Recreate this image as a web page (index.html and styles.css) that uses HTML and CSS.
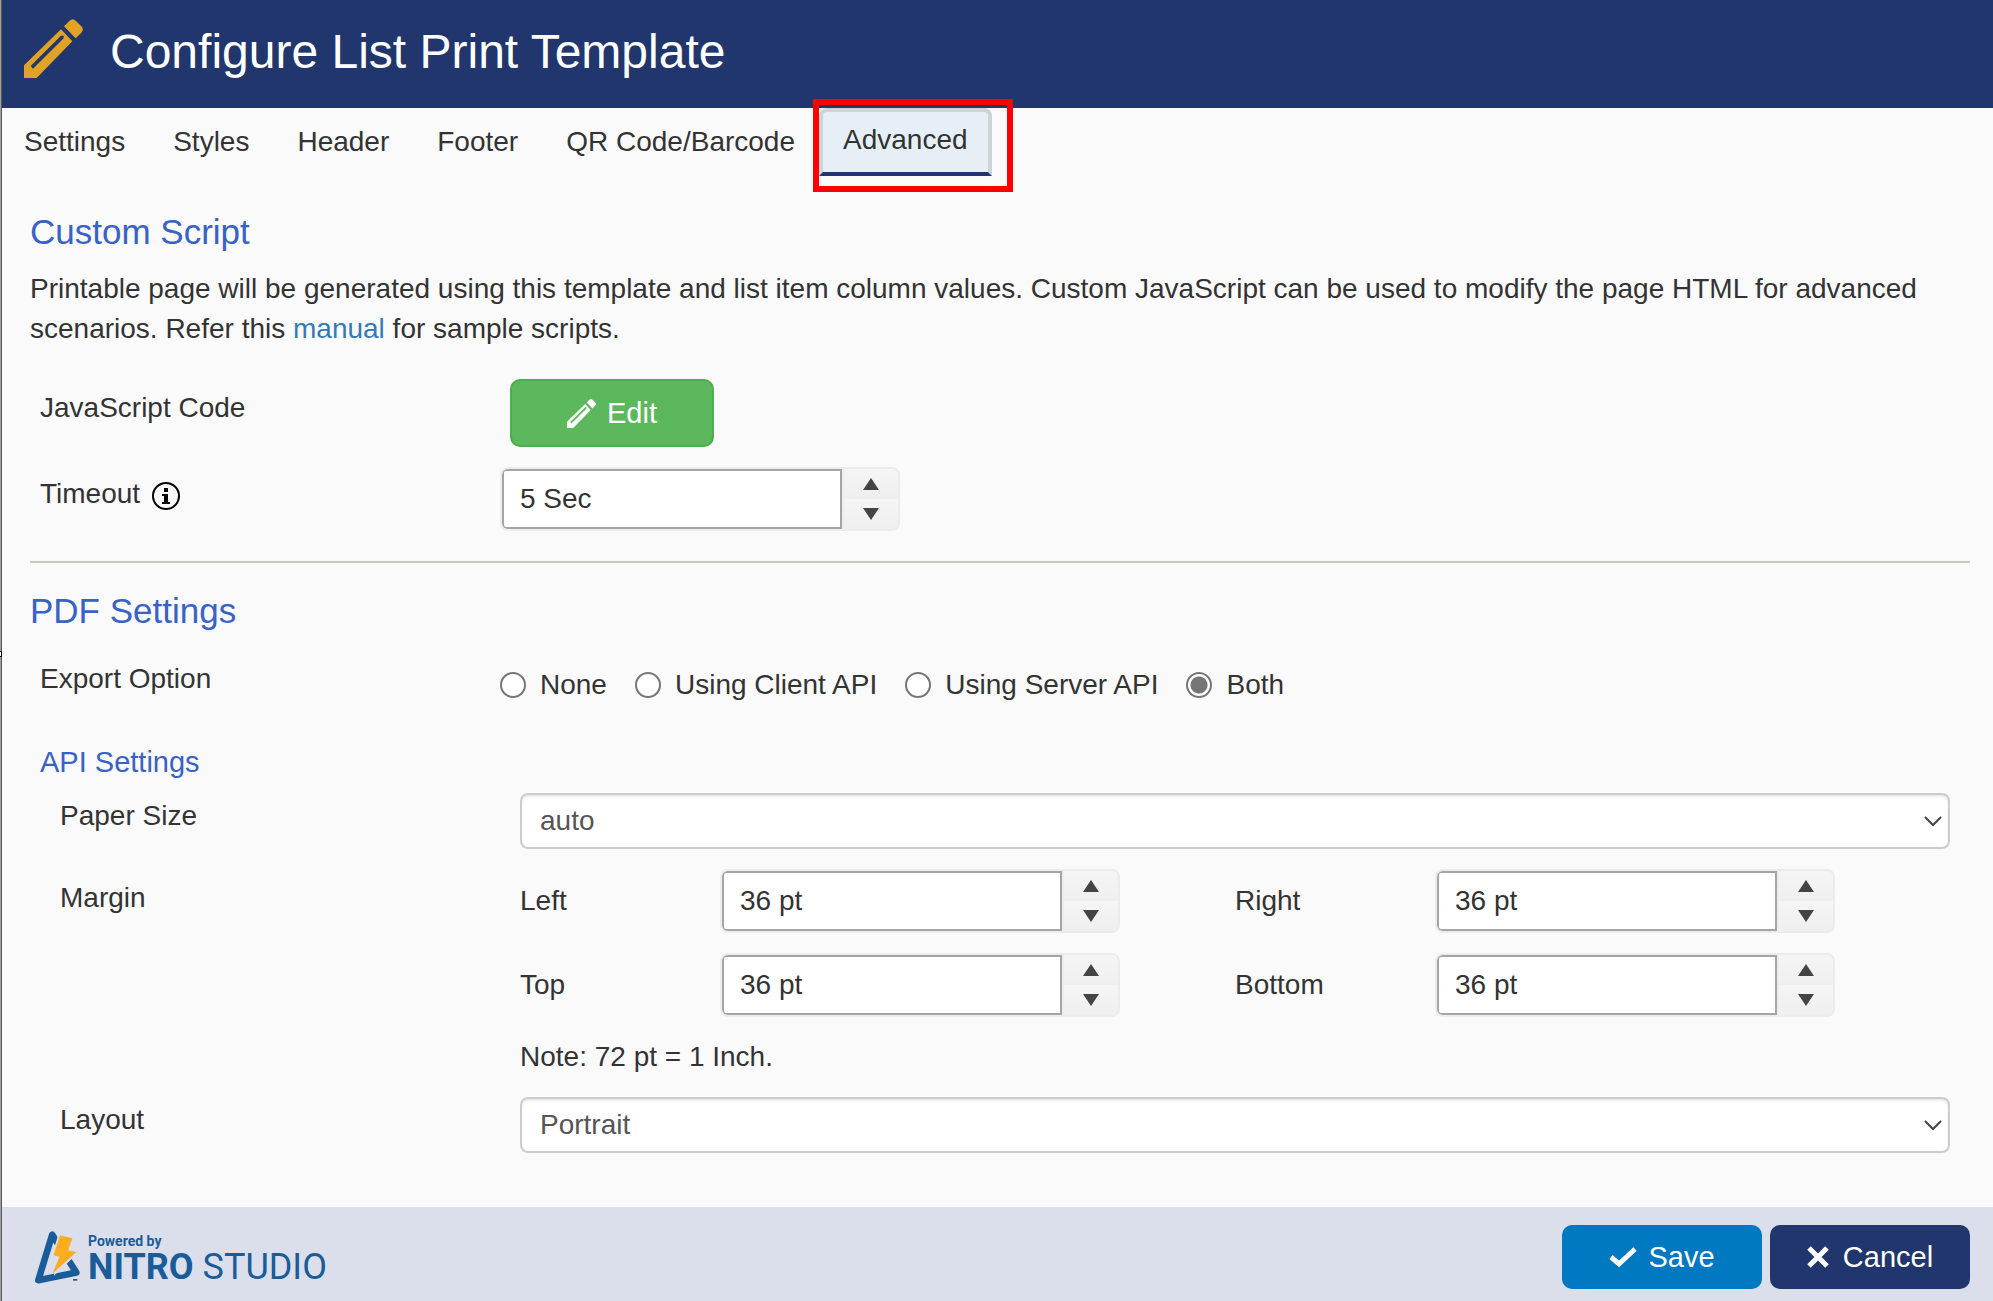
FILE: index.html
```html
<!DOCTYPE html>
<html lang="en">
<head>
<meta charset="utf-8">
<title>Configure List Print Template</title>
<meta name="viewport" content="width=device-width, initial-scale=1">
<link rel="stylesheet" href="styles.css">
</head>
<body>
<svg class="sprite" aria-hidden="true">
  <symbol id="pencil" viewBox="72 57 177 177">
    <path fill-rule="evenodd" d="M72 234V196L183 88L217 124L110 234ZM92 198L99 206L191 115V107H183L92 198Z"/>
    <path d="M192 79L209 62Q218 53 227 62L244 79Q253 88 244 98L227 115Z"/>
  </symbol>
  <symbol id="up" viewBox="0 0 16 12"><path d="M8 0L16 12H0Z"/></symbol>
  <symbol id="down" viewBox="0 0 16 12"><path d="M8 12L16 0H0Z"/></symbol>
  <symbol id="chevron" viewBox="0 0 18 12"><path d="M1 2L9 10L17 2" fill="none" stroke="currentColor" stroke-width="2"/></symbol>
</svg>

<form class="page">
  <div class="resize-handle" aria-hidden="true"></div>

  <header class="header">
    <svg class="header-icon" aria-hidden="true"><use href="#pencil"/></svg>
    <h1 class="title">Configure List Print Template</h1>
  </header>

  <nav class="tabs">
    <a class="tab" href="#settings">Settings</a>
    <a class="tab" href="#styles">Styles</a>
    <a class="tab" href="#header">Header</a>
    <a class="tab" href="#footer">Footer</a>
    <a class="tab" href="#code">QR Code/Barcode</a>
    <div class="tab-current">
      <a class="tab tab-active" href="#advanced" aria-current="page">Advanced</a>
      <span class="highlight"></span>
    </div>
  </nav>

  <main class="content">
    <section class="section">
      <h2 class="heading">Custom Script</h2>
      <p class="intro">Printable page will be generated using this template and list item column values. Custom JavaScript can be used to modify the page HTML for advanced scenarios. Refer this <a class="link" href="#manual">manual</a> for sample scripts.</p>
      <div class="rows">
        <div class="row">
          <span class="label label-button">JavaScript Code</span>
          <button class="button button-edit" type="button">
            <svg class="edit-icon" aria-hidden="true"><use href="#pencil"/></svg>Edit
          </button>
        </div>
        <div class="row">
          <div class="label label-spinner">
            <label for="timeout">Timeout</label>
            <svg class="info" viewBox="0 0 28 28" aria-hidden="true"><circle cx="14" cy="14" r="13" fill="none" stroke="#000" stroke-width="2"/><path d="M12 6h4v4h-4zM10 12h6v8h2v2h-8v-2h2v-6h-2z"/></svg>
          </div>
          <div class="spinner">
            <input class="spinner-input" id="timeout" type="text" value="5 Sec">
            <div class="spinner-buttons">
              <button class="step" type="button" aria-label="Increase timeout"><svg class="arrow"><use href="#up"/></svg></button>
              <button class="step" type="button" aria-label="Decrease timeout"><svg class="arrow"><use href="#down"/></svg></button>
            </div>
          </div>
        </div>
      </div>
    </section>

    <section class="section section-pdf">
      <h2 class="heading">PDF Settings</h2>
      <div class="row row-export">
        <span class="label" id="export-label">Export Option</span>
        <div class="radios" role="radiogroup" aria-labelledby="export-label">
          <label class="option"><input class="radio" type="radio" name="export">None</label>
          <label class="option"><input class="radio" type="radio" name="export">Using Client API</label>
          <label class="option"><input class="radio" type="radio" name="export">Using Server API</label>
          <label class="option"><input class="radio" type="radio" name="export" checked>Both</label>
        </div>
      </div>

      <h3 class="subheading">API Settings</h3>
      <div class="rows rows-api">
        <div class="row">
          <label class="label label-select" for="paper">Paper Size</label>
          <div class="select-wrap">
            <select class="select" id="paper"><option>auto</option></select>
            <svg class="chevron" aria-hidden="true"><use href="#chevron"/></svg>
          </div>
        </div>
        <div class="row">
          <span class="label label-button">Margin</span>
          <div class="margins">
            <div class="margin">
              <label for="left">Left</label>
              <div class="spinner">
                <input class="spinner-input" id="left" type="text" value="36 pt">
                <div class="spinner-buttons">
                  <button class="step" type="button" aria-label="Increase left"><svg class="arrow"><use href="#up"/></svg></button>
                  <button class="step" type="button" aria-label="Decrease left"><svg class="arrow"><use href="#down"/></svg></button>
                </div>
              </div>
            </div>
            <div class="margin">
              <label for="right">Right</label>
              <div class="spinner">
                <input class="spinner-input" id="right" type="text" value="36 pt">
                <div class="spinner-buttons">
                  <button class="step" type="button" aria-label="Increase right"><svg class="arrow"><use href="#up"/></svg></button>
                  <button class="step" type="button" aria-label="Decrease right"><svg class="arrow"><use href="#down"/></svg></button>
                </div>
              </div>
            </div>
            <div class="margin">
              <label for="top">Top</label>
              <div class="spinner">
                <input class="spinner-input" id="top" type="text" value="36 pt">
                <div class="spinner-buttons">
                  <button class="step" type="button" aria-label="Increase top"><svg class="arrow"><use href="#up"/></svg></button>
                  <button class="step" type="button" aria-label="Decrease top"><svg class="arrow"><use href="#down"/></svg></button>
                </div>
              </div>
            </div>
            <div class="margin">
              <label for="bottom">Bottom</label>
              <div class="spinner">
                <input class="spinner-input" id="bottom" type="text" value="36 pt">
                <div class="spinner-buttons">
                  <button class="step" type="button" aria-label="Increase bottom"><svg class="arrow"><use href="#up"/></svg></button>
                  <button class="step" type="button" aria-label="Decrease bottom"><svg class="arrow"><use href="#down"/></svg></button>
                </div>
              </div>
            </div>
            <p class="note">Note: 72 pt = 1 Inch.</p>
          </div>
        </div>
        <div class="row">
          <label class="label label-select" for="layout">Layout</label>
          <div class="select-wrap">
            <select class="select" id="layout"><option>Portrait</option></select>
            <svg class="chevron" aria-hidden="true"><use href="#chevron"/></svg>
          </div>
        </div>
      </div>
    </section>
  </main>

  <footer class="footer">
    <div class="logo">
      <svg class="logo-mark" viewBox="105 121 136 159" aria-hidden="true">
        <path d="M157 132L115 269L230 246Z" fill="none" stroke="#1a5c9a" stroke-width="20" stroke-linejoin="round"/>
        <path d="M177 127L226 138L212 176L240 182L162 256L172 202L155 196Z" fill="#dadfeb"/>
        <path d="M181 133L218 142L205 179L230 184L158 249L179 198L161 194Z" fill="#fdab1f"/>
        <path d="M220 268H233" stroke="#1a5c9a" stroke-width="5"/>
      </svg>
      <div class="logo-text">
        <span class="logo-small">Powered by</span>
        <span class="logo-name"><b>NITRO</b> STUDIO</span>
      </div>
    </div>
    <div class="actions">
      <button class="button button-save" type="button">
        <svg class="check" viewBox="0 0 28 22" aria-hidden="true"><path d="M2 11L10 18L26 3" fill="none" stroke="currentColor" stroke-width="5"/></svg>Save
      </button>
      <button class="button button-cancel" type="button">
        <svg class="cross" viewBox="0 0 22 22" aria-hidden="true"><path d="M2 2L20 20M20 2L2 20" fill="none" stroke="currentColor" stroke-width="5"/></svg>Cancel
      </button>
    </div>
  </footer>
</form>
</body>
</html>
```
FILE: styles.css
```css
* {
  box-sizing: border-box;
}

body {
  margin: 0;
  background: #fafafa;
  color: #333;
  font: 28px/40px "Liberation Sans", Arial, sans-serif;
}

h1, h2, h3, p {
  margin: 0;
  font-weight: 400;
}

a {
  text-decoration: none;
}

button, input, select {
  font: inherit;
  margin: 0;
}

svg {
  display: block;
  flex: none;
  fill: currentColor;
}

.sprite {
  position: absolute;
  width: 0;
  height: 0;
}

.page {
  position: relative;
  display: flex;
  flex-direction: column;
  min-height: 100vh;
}

/* window edge */
.page::before {
  content: "";
  position: absolute;
  inset: 0 auto 0 0;
  width: 2px;
  background: linear-gradient(90deg, #a0a0a0 50%, #5a5a5a 50%);
}

.resize-handle {
  position: absolute;
  top: 50%;
  left: 0;
  width: 2px;
  height: 6px;
  border: solid #000;
  border-width: 1px 1px 1px 0;
  background: #fff;
}

.header {
  display: flex;
  align-items: flex-start;
  gap: 27px;
  padding: 19px 24px 23px;
  background: #21366c;
  color: #fff;
}

.header-icon {
  width: 59px;
  height: 59px;
  color: #e1a325;
}

.title {
  font-size: 48px;
  line-height: 66px;
}

.tabs {
  display: flex;
}

.tab {
  display: block;
  padding: 10px 20px;
  border: 4px solid transparent;
  color: #333;
}

.tab-current {
  position: relative;
}

.tab-active {
  padding: 8px 20px 12px;
  border-color: #cbd5d8;
  border-bottom-color: #21366c;
  border-radius: 8px 8px 0 0;
  background: #e7eff6;
}

.highlight {
  position: absolute;
  inset: -9px -21px -16px -6px;
  border: 6px solid #f00;
  pointer-events: none;
}

.content {
  flex: 1;
  padding: 36px 23px 54px 30px;
}

.section-pdf {
  margin-top: 30px;
  padding-top: 28px;
  border-top: 2px solid #cdc3c3;
}

.heading {
  color: #3862c6;
  font-size: 35px;
}

.intro {
  margin: 17px 0 30px;
}

.link {
  color: #337ab7;
}

.rows {
  display: flex;
  flex-direction: column;
  gap: 20px;
  padding-left: 10px;
}

.row {
  display: grid;
  grid-template-columns: 460px 1fr;
  align-items: start;
}

.row-export {
  padding: 28px 0 0 10px;
}

.label-button {
  padding-top: 9px;
}

.label-spinner {
  display: flex;
  gap: 12px;
  align-items: center;
  padding-top: 7px;
}

.info {
  width: 28px;
  height: 28px;
  margin-top: 4px;
  color: #000;
}

.label-select {
  padding-top: 3px;
}

.button {
  display: flex;
  align-items: center;
  justify-content: center;
  gap: 11px;
  border: 0;
  border-radius: 10px;
  color: #fff;
  font-size: 29px;
  width: 200px;
  height: 64px;
}

.button-edit {
  width: 204px;
  height: 68px;
  margin-left: 10px;
  border: 2px solid #4cae4c;
  background: #5cb85c;
}

.edit-icon {
  width: 29px;
  height: 29px;
}

.spinner {
  display: flex;
  width: 400px;
  height: 64px;
  border: 2px solid #ececec;
  border-radius: 8px;
  background: #ececec;
  overflow: hidden;
}

.spinner-input {
  width: 340px;
  padding: 0 16px;
  border: 2px solid #a5a5a5;
  border-radius: 4px 0 0 4px;
  background: #fff;
  color: #333;
}

.spinner-buttons {
  display: flex;
  flex: 1;
  flex-direction: column;
  padding-left: 2px;
}

.step {
  display: flex;
  flex: 1;
  align-items: center;
  justify-content: center;
  padding: 0;
  border: 0;
  background: linear-gradient(#f5f5f5, #efefef);
  color: #444;
}

.arrow {
  width: 16px;
  height: 12px;
}

.radios {
  display: flex;
  flex-wrap: wrap;
  gap: 28px;
  padding-top: 6px;
}

.option {
  display: flex;
  align-items: center;
  gap: 14px;
}

.radio {
  appearance: none;
  width: 26px;
  height: 26px;
  border: 2px solid #767676;
  border-radius: 50%;
  background: #fff;
}

.radio:checked {
  background: radial-gradient(circle, #767676 8px, #fff 9px);
}

.subheading {
  margin-top: 37px;
  padding-left: 10px;
  color: #3862c6;
  font-size: 29px;
}

.rows-api {
  padding: 11px 20px 0 30px;
}

.select-wrap {
  position: relative;
}

.select {
  appearance: none;
  display: block;
  width: 100%;
  height: 56px;
  padding: 0 48px 0 18px;
  border: 2px solid #ccc;
  border-radius: 8px;
  background: #fff;
  box-shadow: inset 0 2px 2px rgba(0, 0, 0, 0.08);
  color: #555;
}

.chevron {
  position: absolute;
  top: 22px;
  right: 8px;
  width: 18px;
  height: 12px;
  color: #444;
  pointer-events: none;
}

.margins {
  display: grid;
  grid-template-columns: 1fr 1fr;
  gap: 20px 0;
}

.margin {
  display: grid;
  grid-template-columns: 200px 1fr;
  align-items: center;
}

.note {
  grid-column: 1 / -1;
}

.footer {
  display: flex;
  align-items: center;
  justify-content: space-between;
  padding: 15px 23px 9px 35px;
  background: #dadfeb;
}

.logo {
  display: flex;
  align-items: center;
  gap: 8px;
  color: #1a5c9a;
  font-family: Roboto, sans-serif;
}

.logo-mark {
  width: 45px;
  height: 53px;
}

.logo-text {
  display: flex;
  flex-direction: column;
  padding-top: 3px;
}

.logo-small {
  font-size: 14px;
  font-weight: 700;
  line-height: 16px;
}

.logo-name {
  font-size: 36px;
  line-height: 36px;
}

.actions {
  display: flex;
  gap: 8px;
  padding: 3px 0;
}

.button-save {
  background: #0078c2;
}

.button-cancel {
  background: #21366c;
  gap: 14px;
}

.check {
  width: 28px;
  height: 22px;
}

.cross {
  width: 22px;
  height: 22px;
}
```
